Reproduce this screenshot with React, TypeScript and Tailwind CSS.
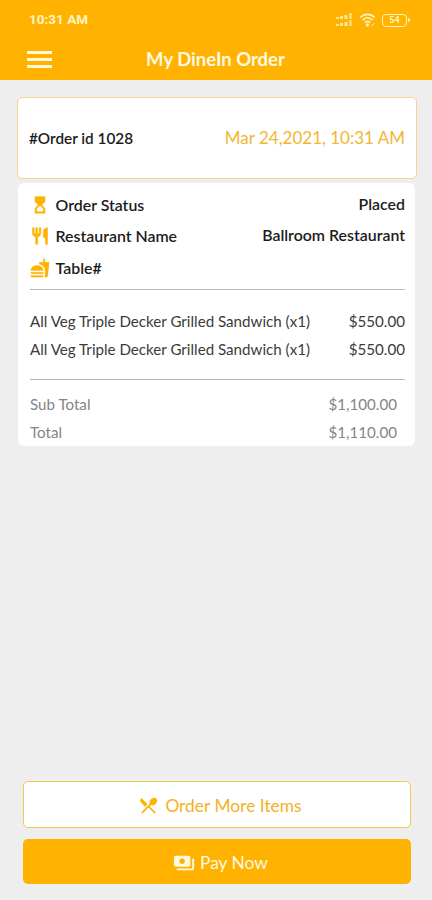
import type { ReactNode } from "react";
import {
	MdFastfood,
	MdHourglassTop,
	MdPayments,
	MdRestaurant,
	MdRestaurantMenu,
} from "react-icons/md";

const items = [
	{ id: 1, name: "All Veg Triple Decker Grilled Sandwich (x1)", price: "$550.00" },
	{ id: 2, name: "All Veg Triple Decker Grilled Sandwich (x1)", price: "$550.00" },
];

const totals = [
	{ label: "Sub Total", value: "$1,100.00" },
	{ label: "Total", value: "$1,110.00" },
];

const StatusBar = () => {
	return (
		<div className="flex h-10 items-center justify-between pl-[29px] pr-[22px] text-[#fff3c4]">
			<span className="font-['Roboto',sans-serif] text-[13.500px] font-bold leading-none">
				10:31 AM
			</span>
			<div className="flex items-center gap-[6px]">
				<svg width="17" height="14" viewBox="0 0 17 14" fill="currentColor">
					<path d="M0 4h3v2H0zM4 3h3v3H4zM8.500 2h3v4h-3zM13.500 0h2v6h-2zM0 11h3v2H0zM4 10h3v3H4zM8.500 9h3v4h-3zM13.500 7h2v6h-2z" opacity=".8" />
				</svg>
				<svg width="17" height="14" viewBox="0 0 16 14" fill="none" stroke="currentColor" strokeWidth="1.700">
					<path d="M.8 4.500C5 .3 11 .3 15.200 4.500M3 7.200c3-3 7-3 10 0M5.300 9.700c1.700-1.600 3.700-1.600 5.400 0" />
					<circle cx="8" cy="12" r=".8" fill="currentColor" />
					<path d="M12 12.500l3-2" strokeWidth="1" />
				</svg>
				<div className="flex items-center">
					<div className="flex h-[13px] w-[25px] items-center justify-center rounded-[4px] border-[1.500px] border-current font-['Roboto',sans-serif] text-[9px] font-bold leading-none">
						54
					</div>
					<div className="ml-px h-1 w-[2px] rounded-r bg-current" />
				</div>
			</div>
		</div>
	);
};

const Header = () => {
	return (
		<header className="h-20 shrink-0 bg-[#ffb300]">
			<StatusBar />
			<div className="grid h-[38px] grid-cols-[1fr_auto_1fr] items-center pl-[26.500px] pr-[27.500px]">
				<button type="button" aria-label="Menu" className="flex w-[25px] flex-col gap-[4px]">
					<span className="h-[3px] bg-[#fff8dd]" />
					<span className="h-[3px] bg-[#fff8dd]" />
					<span className="h-[3px] bg-[#fff8dd]" />
				</button>
				<h1 className="text-[18.500px] font-bold text-[#fff8e3]">My DineIn Order</h1>
			</div>
		</header>
	);
};

type InfoRowProps = { icon: ReactNode; label: string; value?: string };

const InfoRow = ({ icon, label, value }: InfoRowProps) => {
	return (
		<div className="flex h-[31.500px] items-center text-[15.900px] font-semibold text-[#1c1c1c]">
			<span className="flex w-[25.500px] text-[20px] text-[#ffb300] [&_[fill=none]]:stroke-none">{icon}</span>
			<span>{label}</span>
			<span className="ml-auto -mt-[2px]">{value}</span>
		</div>
	);
};

const App = () => {
	return (
		<div className="flex h-[900px] w-[432px] flex-col bg-[#eee] font-['Lato',sans-serif] text-[15.150px] leading-5">
			<Header />
			<main className="flex-1 pl-[17px] pr-[15px] pt-[17px]">
				<section className="flex h-[82px] items-center justify-between rounded-[5px] border border-[#f8d488] bg-white px-[11px]">
					<span className="text-[15.300px] font-semibold text-[#1c1c1c]">#Order id 1028</span>
					<span className="text-[17px] text-[#f2b632]">Mar 24,2021, 10:31 AM</span>
				</section>
				<section className="ml-px mr-[2px] mt-1 h-[263px] rounded-md bg-white pl-3 pr-[10px] pt-[6px]">
					<InfoRow icon={<MdHourglassTop className="stroke-[0.6px]" />} label="Order Status" value="Placed" />
					<InfoRow icon={<MdRestaurant className="stroke-[0.6px]" />} label="Restaurant Name" value="Ballroom Restaurant" />
					<InfoRow icon={<MdFastfood className="stroke-[0.3px]" />} label="Table#" />
					<div className="mt-[5px] flex h-[91px] flex-col justify-center border-y border-[#b9b9b9] pt-px text-[#3b3b3b]">
						{items.map((item) => (
							<div key={item.id} className="flex h-7 items-center justify-between">
								<span>{item.name}</span>
								<span>{item.price}</span>
							</div>
						))}
					</div>
					<div className="pt-[10.500px] pr-2 text-[#858585]">
						{totals.map((total) => (
							<div key={total.label} className="flex h-7 items-center justify-between">
								<span>{total.label}</span>
								<span>{total.value}</span>
							</div>
						))}
					</div>
				</section>
			</main>
			<footer className="flex flex-col gap-[11px] pb-4 pl-[23px] pr-[21px] text-[17.400px]">
				<button type="button" className="flex h-[47px] items-center justify-center gap-[6px] rounded-[5px] border border-[#f8c653] bg-white pl-[6px] pt-[2px] text-[#f5b125]">
					<MdRestaurantMenu className="text-[21px] text-[#ffb300]" />
					<span>Order More Items</span>
				</button>
				<button type="button" className="flex h-[45px] items-center justify-center gap-[5px] rounded-[5px] bg-[#ffb300] pl-[7px] pt-[2px] text-[#fff8e3]">
					<MdPayments className="text-[22px]" />
					<span>Pay Now</span>
				</button>
			</footer>
		</div>
	);
};

export default App;
